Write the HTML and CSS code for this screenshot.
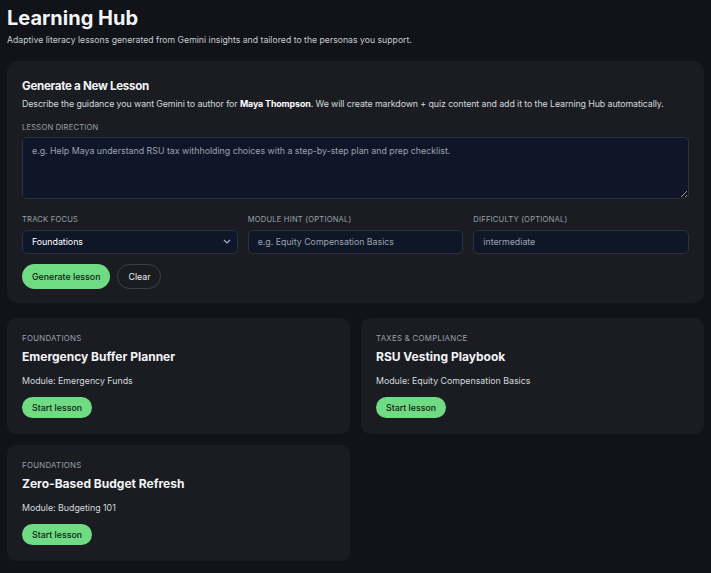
FILE: index.html
```html
<!DOCTYPE html>
<html lang="en">
<head>
  <meta charset="UTF-8">
  <title>Learning Hub</title>
  <link rel="stylesheet" href="styles.css">
</head>
<body>
  <header class="hub-head">
    <h1>Learning Hub</h1>
    <p>Adaptive literacy lessons generated from Gemini insights and tailored to the personas you support.</p>
  </header>

  <section class="panel">
    <h2>Generate a New Lesson</h2>
    <p class="panel-desc">Describe the guidance you want Gemini to author for <strong>Maya Thompson</strong>. We will create markdown + quiz content and add it to the Learning Hub automatically.</p>

    <form id="formLesson">
      <label class="field-label" for="direction">Lesson direction</label>
      <textarea id="direction" name="direction" placeholder="e.g. Help Maya understand RSU tax withholding choices with a step-by-step plan and prep checklist."></textarea>

      <div class="field-row">
        <div class="field">
          <label class="field-label" for="track">Track focus</label>
          <select id="track" name="track">
            <option>Foundations</option>
            <option>Taxes &amp; Compliance</option>
          </select>
        </div>
        <div class="field">
          <label class="field-label" for="module">Module hint (optional)</label>
          <input type="text" id="module" name="module" placeholder="e.g. Equity Compensation Basics">
        </div>
        <div class="field">
          <label class="field-label" for="difficulty">Difficulty (optional)</label>
          <input type="text" id="difficulty" name="difficulty" placeholder="intermediate">
        </div>
      </div>

      <div class="actions">
        <button type="submit" class="btn-green">Generate lesson</button>
        <button type="reset" class="btn-ghost">Clear</button>
      </div>
    </form>
  </section>

  <section class="lessons">
    <article class="lesson">
      <span class="track">Foundations</span>
      <h3>Emergency Buffer Planner</h3>
      <p>Module: Emergency Funds</p>
      <button class="btn-green">Start lesson</button>
    </article>
    <article class="lesson">
      <span class="track">Taxes &amp; Compliance</span>
      <h3>RSU Vesting Playbook</h3>
      <p>Module: Equity Compensation Basics</p>
      <button class="btn-green">Start lesson</button>
    </article>
    <article class="lesson">
      <span class="track">Foundations</span>
      <h3>Zero-Based Budget Refresh</h3>
      <p>Module: Budgeting 101</p>
      <button class="btn-green">Start lesson</button>
    </article>
  </section>
</body>
</html>
```

FILE: styles.css
```css
body { margin: 0; padding: 7px; background: #111318; color: #e8eaef; font-family: Inter, "Noto Sans", sans-serif; }

.hub-head h1 { margin: 0; font-size: 20px; font-weight: 700; line-height: 22px; color: #f3f4f6; }
.hub-head p { margin: 4px 0 0; font-size: 8.7px; line-height: 14px; color: #c9ccd3; }

.panel { margin-top: 14px; padding: 15px 15px 14px; background: #1a1c22; border-radius: 10px; }
.panel h2 { margin: 2px 0 0; font-size: 11.6px; line-height: 16px; font-weight: 700; letter-spacing: -0.3px; color: #f3f4f6; }
.panel-desc { margin: 3px 0 0; font-size: 8.85px; line-height: 13px; color: #d5d8de; letter-spacing: -0.1px; }
.panel-desc strong { color: #fff; }

.field-label { display: block; font-size: 7.6px; line-height: 10px; text-transform: uppercase; letter-spacing: 0.2px; color: #9aa0ab; }
form > .field-label { margin-top: 13px; }

textarea, select, input { box-sizing: border-box; width: 100%; background: #0f1628; border: 1px solid #2a3142; border-radius: 5px; color: #e5e7eb; font-family: inherit; font-size: 8.8px; }
textarea { display: block; height: 62px; margin-top: 4px; padding: 7px 9px; resize: vertical; }
textarea::placeholder, input::placeholder { color: #9ca3af; }

.field-row { display: grid; grid-template-columns: repeat(3, 1fr); gap: 10px; margin-top: 16px; }
.field .field-label { margin-bottom: 4px; }
select, input { height: 24px; padding: 0 9px; }
select { appearance: none; padding-right: 20px; background-image: url("data:image/svg+xml,%3Csvg xmlns='http://www.w3.org/2000/svg' width='8' height='5'%3E%3Cpath d='M1 1l3 3 3-3' fill='none' stroke='%23aab' stroke-width='1.2'/%3E%3C/svg%3E"); background-repeat: no-repeat; background-position: right 6px center; color: #fff; }

.actions { display: flex; gap: 7px; margin-top: 10px; }
button { font-family: inherit; cursor: pointer; }
.btn-green { height: 25px; padding: 0 10px; border: none; border-radius: 13px; background: #6fdc84; color: #0e1a12; font-size: 8.8px; font-weight: 500; }
.btn-ghost { height: 25px; padding: 0 10px; border: 1px solid #3a3f4b; border-radius: 13px; background: transparent; color: #e5e7eb; font-size: 8.8px; }

.lessons { display: grid; grid-template-columns: 1fr 1fr; gap: 11px 11px; margin-top: 15px; }
.lesson { padding: 15px 15px 16px; background: #1a1c22; border-radius: 9px; }
.track { display: block; font-size: 7.8px; line-height: 10px; text-transform: uppercase; letter-spacing: 0.3px; color: #9aa0ab; }
.lesson h3 { margin: 5px 0 0; font-size: 12px; line-height: 18px; font-weight: 700; color: #f3f4f6; }
.lesson p { margin: 9px 0 0; font-size: 8.8px; line-height: 12px; color: #d5d8de; }
.lesson .btn-green { height: 21px; margin-top: 10px; padding: 0 10px; border-radius: 11px; }
```
